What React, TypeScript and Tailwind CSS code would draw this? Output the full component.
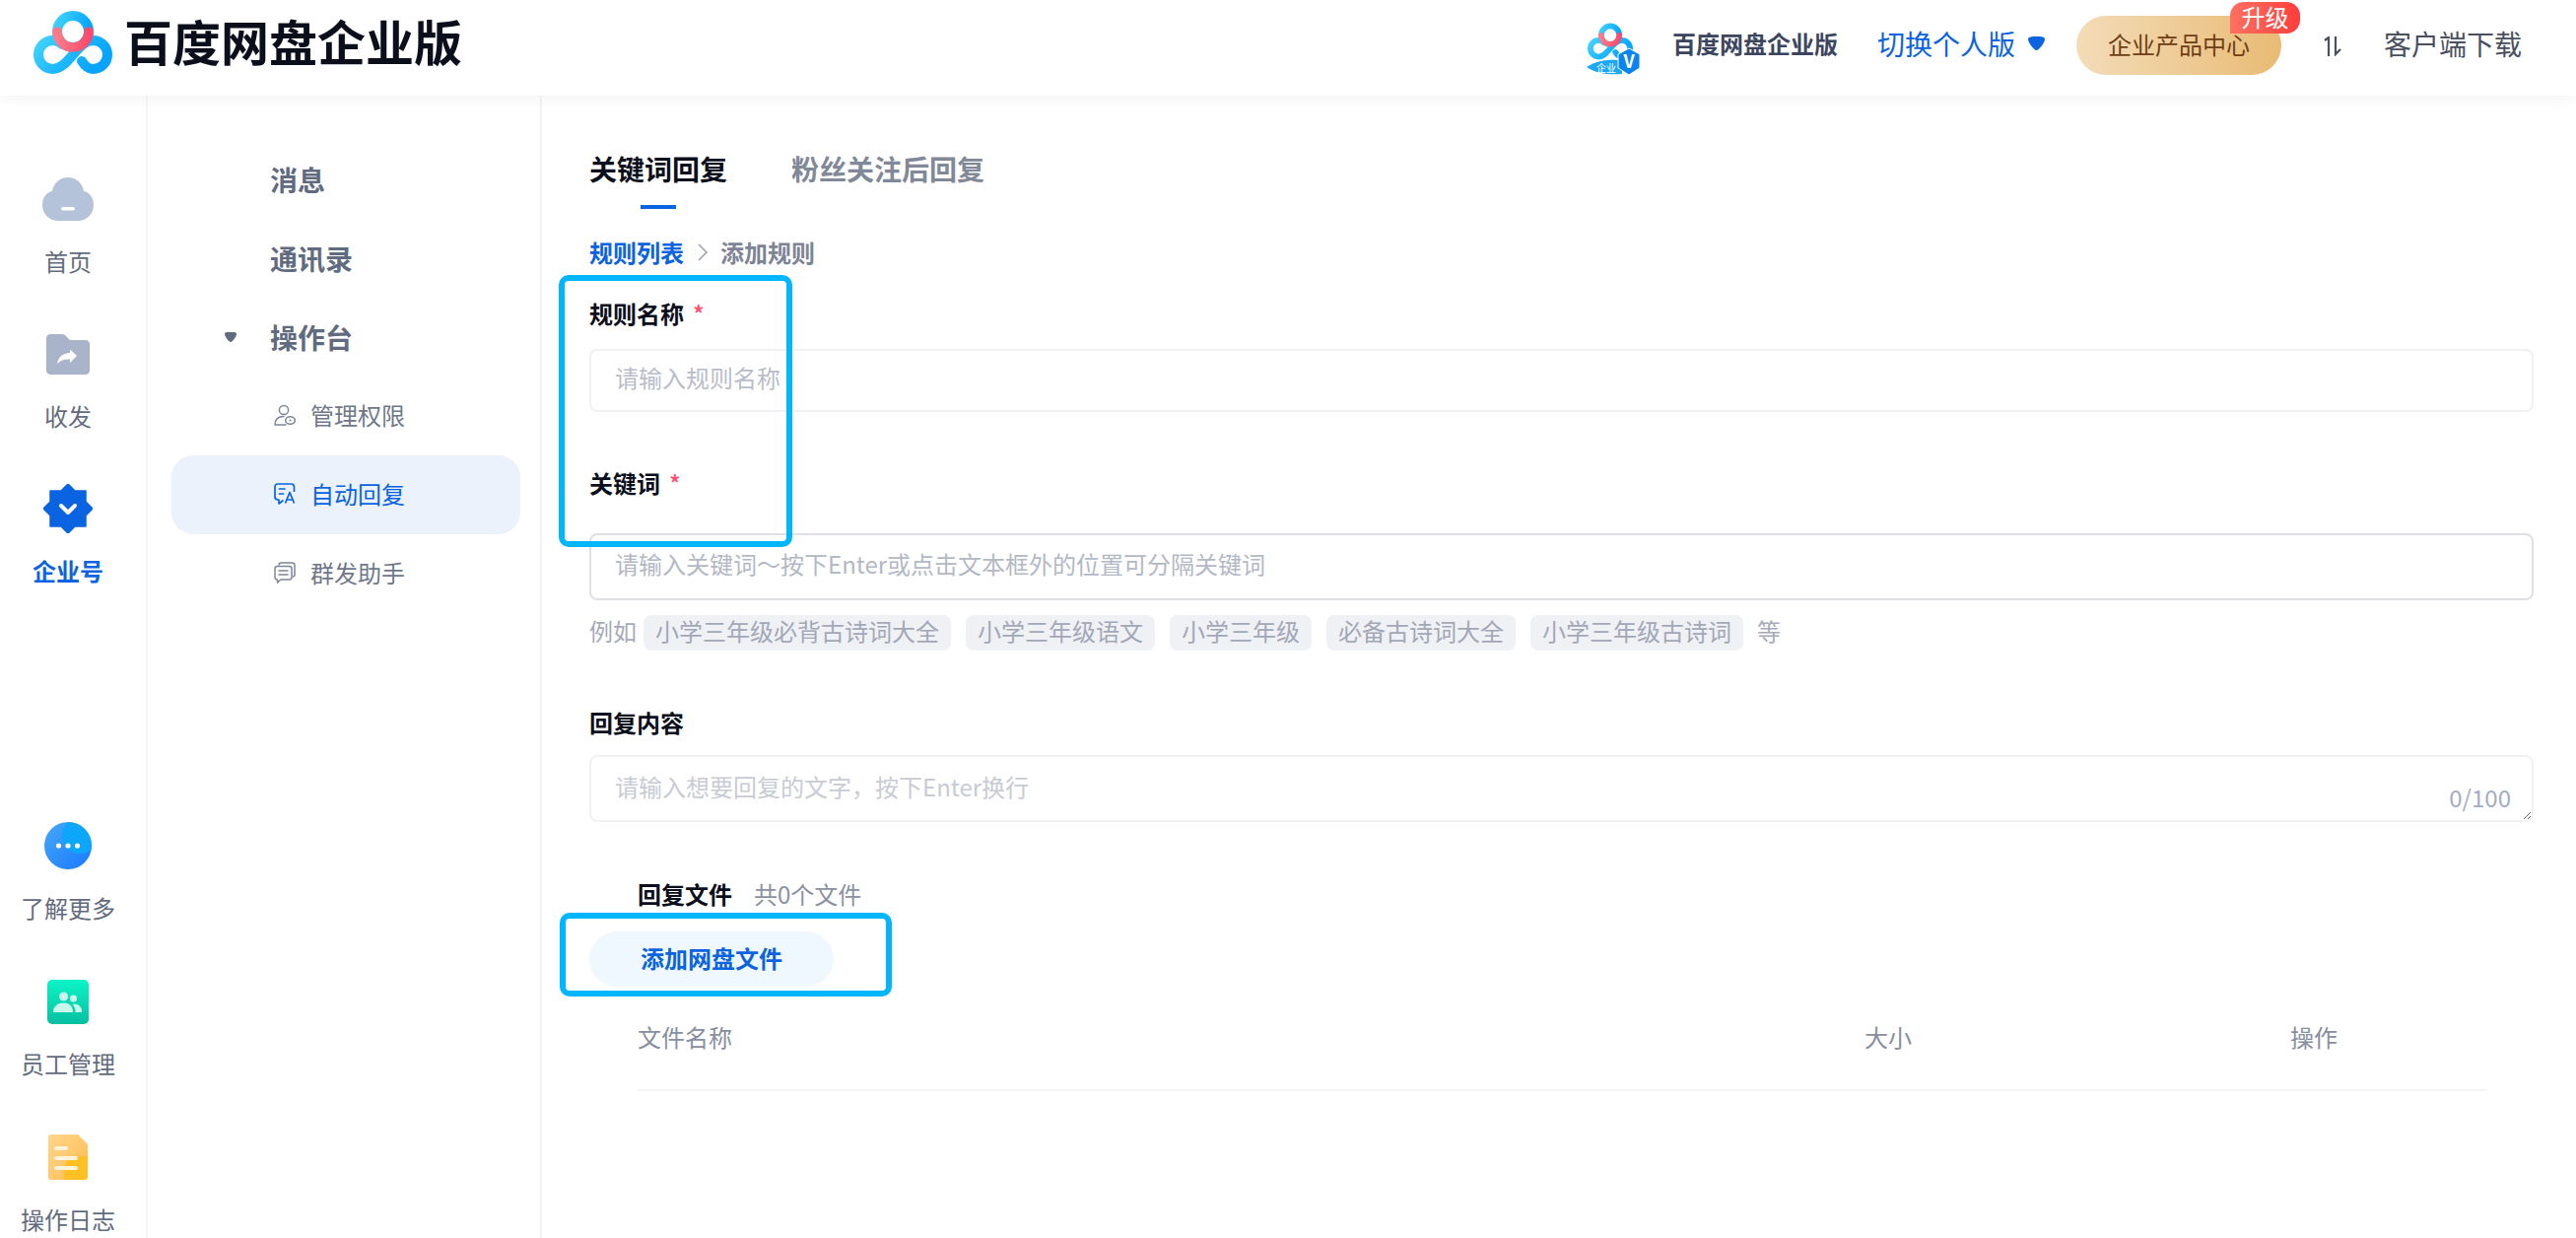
import React from "react";

const FONT = "font-['Noto_Sans_CJK_SC','Noto_Sans',sans-serif]";

const CloudLogo: React.FC<{ id: string; className: string }> = ({ id, className }) => (
    <svg viewBox="0 0 80 64" className={className}>
        <defs>
            <linearGradient id={`${id}-b`} x1="0" y1="0" x2="1" y2="0.4">
                <stop offset="0" stopColor="#3fd2ff" />
                <stop offset="1" stopColor="#06a4ff" />
            </linearGradient>
            <linearGradient id={`${id}-r`} x1="0" y1="0" x2="1" y2="0">
                <stop offset="0" stopColor="#ff7a8a" />
                <stop offset="1" stopColor="#ff4a6c" />
            </linearGradient>
        </defs>
        <path
            d="M49 51 C52 56 56 59 60.500 59 A14.500 14.500 0 0 0 60.500 30 C44 30 36 59 19.500 59 A14.500 14.500 0 0 1 19.500 30 C24 30 27 32 29 34"
            fill="none"
            stroke={`url(#${id}-b)`}
            strokeWidth="10"
            strokeLinecap="round"
        />
        <circle cx="40" cy="21" r="16" fill="none" stroke={`url(#${id}-b)`} strokeWidth="10" />
        <path
            d="M24 21 A16 16 0 0 0 56 21"
            fill="none"
            stroke={`url(#${id}-r)`}
            strokeWidth="9.500"
            strokeLinecap="round"
        />
    </svg>
);

const HomeIcon = () => (
    <svg viewBox="0 0 52 44" className="w-[52px] h-[44px]">
        <path
            d="M26 0 C34 0 41 6 42 14 C48 15 52 21 52 28 C52 37 45 44 36 44 H16 C7 44 0 37 0 28 C0 21 4 15 10 14 C11 6 18 0 26 0 Z"
            fill="#b4c2da"
        />
        <rect x="19" y="30" width="14" height="3.500" rx="1.750" fill="#fff" />
    </svg>
);

const FolderIcon = () => (
    <svg viewBox="0 0 44 41" className="w-[44px] h-[41px]">
        <path
            d="M4 0 H16 C18 0 19 1 20 2 L24 6 H40 C42 6 44 8 44 10 V37 C44 39 42 41 40 41 H4 C2 41 0 39 0 37 V4 C0 2 2 0 4 0 Z"
            fill="#a9b4ca"
        />
        <path d="M31 22 L24 15.500 V19 C17 19.500 12 23 11 30 C15 26 19 25 24 25.500 V29 Z" fill="#fff" />
    </svg>
);

const VerifiedIcon = () => (
    <svg viewBox="0 0 50 50" className="w-[50px] h-[50px]">
        <path
            d="M25 0 L32 7 H43 V18 L50 25 L43 32 V43 H32 L25 50 L18 43 H7 V32 L0 25 L7 18 V7 H18 Z"
            fill="#0a63e0"
            stroke="#0a63e0"
            strokeWidth="1.500"
            strokeLinejoin="round"
        />
        <path d="M18 22 L25 29 L32 22" fill="none" stroke="#fff" strokeWidth="4" strokeLinecap="round" strokeLinejoin="round" />
    </svg>
);

const MoreIcon = () => (
    <svg viewBox="0 0 48 48" className="w-[48px] h-[48px]">
        <defs>
            <linearGradient id="more-a" x1="0" y1="0" x2="1" y2="1">
                <stop offset="0" stopColor="#46a8f8" />
                <stop offset="1" stopColor="#1a78ff" />
            </linearGradient>
            <clipPath id="more-c">
                <circle cx="24" cy="24" r="24" />
            </clipPath>
        </defs>
        <circle cx="24" cy="24" r="24" fill="url(#more-a)" />
        <circle cx="36" cy="14" r="18" fill="#0ca6fb" clipPath="url(#more-c)" />
        <circle cx="14.500" cy="24" r="2.600" fill="#fff" />
        <circle cx="24" cy="24" r="2.600" fill="#fff" />
        <circle cx="33.500" cy="24" r="2.600" fill="#fff" />
    </svg>
);

const StaffIcon = () => (
    <svg viewBox="0 0 42 45" className="w-[42px] h-[45px]">
        <defs>
            <linearGradient id="staff-a" x1="0" y1="0" x2="0" y2="1">
                <stop offset="0" stopColor="#0cf5c8" />
                <stop offset="1" stopColor="#06bfa0" />
            </linearGradient>
        </defs>
        <rect width="42" height="45" rx="5" fill="url(#staff-a)" />
        <circle cx="16.500" cy="17" r="4.500" fill="#c8f7ec" />
        <circle cx="26.500" cy="19" r="3.600" fill="#c8f7ec" />
        <path d="M6 33 C6 26 11 23.500 16.500 23.500 C22 23.500 26 26 26 33 Z" fill="#c8f7ec" />
        <path d="M27 24.500 C32 24.500 35.500 28 35 33 H28.500 C28.500 29.500 27.500 27 25.500 25 Z" fill="#c8f7ec" />
    </svg>
);

const LogIcon = () => (
    <svg viewBox="0 0 40 46" className="w-[40px] h-[46px]">
        <defs>
            <linearGradient id="log-a" x1="0" y1="0" x2="1" y2="1">
                <stop offset="0" stopColor="#ffd68a" />
                <stop offset="1" stopColor="#ffbb50" />
            </linearGradient>
        </defs>
        <path d="M3 0 H30 L40 10 V43 C40 45 38 46 37 46 H3 C1 46 0 45 0 43 V3 C0 1 1 0 3 0 Z" fill="url(#log-a)" />
        <path d="M40 22 V43 C40 45 38 46 37 46 H16 V35 C16 28 22 22 29 22 Z" fill="#ffc024" />
        <rect x="6" y="12" width="14" height="4" rx="2" fill="#fff3dc" />
        <rect x="6" y="22" width="24" height="4" rx="2" fill="#fff3dc" />
        <rect x="6" y="32" width="24" height="4" rx="2" fill="#fff3dc" />
    </svg>
);

const PersonEyeIcon = () => (
    <svg viewBox="0 0 22 22" className="w-[22px] h-[22px]" fill="none" stroke="#7e8698" strokeWidth="1.500">
        <circle cx="10" cy="6" r="4.600" />
        <path d="M1 21 C1 15 5 12.500 10 12.500 M1 21 H12" strokeLinecap="round" />
        <ellipse cx="16.500" cy="16.500" rx="4.800" ry="3.800" />
        <circle cx="16.500" cy="16.500" r="1.100" fill="#7e8698" stroke="none" />
    </svg>
);

const ChatAIcon = () => (
    <svg viewBox="0 0 22 22" className="w-[22px] h-[22px]" fill="none" stroke="#0a63e0" strokeWidth="1.700">
        <path d="M20.500 9 V4 C20.500 2 19 1 17.500 1 H4 C2 1 1 2 1 4 V14 C1 16 2 17 4 17 H5 V21 L9.500 17.500" strokeLinejoin="round" />
        <path d="M5.500 6 H11 M5.500 11 H9.500" strokeLinecap="round" />
        <path d="M11.500 20.500 L16 9.500 L20.500 20.500 M13 17 H19" strokeLinejoin="round" />
    </svg>
);

const StackChatIcon = () => (
    <svg viewBox="0 0 22 22" className="w-[22px] h-[22px]" fill="none" stroke="#7e8698" strokeWidth="1.500">
        <path d="M5 3.500 C5 2 6 1 7.500 1 H18.500 C20 1 21 2 21 3.500 V13 C21 14.500 20 15 19 15" />
        <path d="M3.500 4.500 H15.500 C17 4.500 18 5.500 18 7 V15.500 C18 17 17 18 15.500 18 H7 L3.500 21 V18 C2 18 1 17 1 15.500 V7 C1 5.500 2 4.500 3.500 4.500 Z" strokeLinejoin="round" />
        <path d="M5 9 H14 M5 13 H14" strokeLinecap="round" />
    </svg>
);

const topRail = [
    { label: "首页", icon: <HomeIcon /> },
    { label: "收发", icon: <FolderIcon /> },
    { label: "企业号", icon: <VerifiedIcon />, active: true },
];

const bottomRail = [
    { label: "了解更多", icon: <MoreIcon /> },
    { label: "员工管理", icon: <StaffIcon /> },
    { label: "操作日志", icon: <LogIcon /> },
];

const exampleTags = ["小学三年级必背古诗词大全", "小学三年级语文", "小学三年级", "必备古诗词大全", "小学三年级古诗词"];

const RailItem: React.FC<{ label: string; icon: React.ReactNode; active?: boolean }> = ({ label, icon, active }) => (
    <div className="flex flex-col items-center gap-4">
        <div className="h-16 flex items-center justify-center">{icon}</div>
        <span className={active ? "h-8 text-2xl leading-[30px] font-bold text-[#0a63e0]" : "h-8 text-2xl leading-[30px] text-[#636b7f]"}>
            {label}
        </span>
    </div>
);

const Header = () => (
    <header className="relative z-10 h-[97px] shrink-0 bg-white flex items-center justify-between pl-[34px] pr-[55px] shadow-[0_4px_14px_rgba(0,0,0,0.045)]">
        <div className="flex items-center gap-3 -mt-[11px]">
            <CloudLogo id="main" className="w-20 h-16" />
            <span className="text-[49px] leading-[60px] font-bold text-[#0b0f1c] -mt-1">百度网盘企业版</span>
        </div>
        <div className="flex items-center -mt-[5px]">
            <div className="relative w-[57px] h-[54px] mt-2">
                <CloudLogo id="small" className="absolute left-[3px] top-0 w-[46px] h-[38px]" />
                <svg viewBox="0 0 57 54" className="absolute inset-0 w-[57px] h-[54px]">
                    <path d="M2 45 C12 38 26 37 38 38 L38 52 C26 53 12 52 2 45 Z" fill="#1ba8f5" />
                    <text x="22" y="50" fontSize="10" textAnchor="middle" fill="#fff">企业</text>
                    <path d="M45 26 L56 32 V46 L45 53 L34 46 V32 Z" fill="#0a84f0" stroke="#fff" strokeWidth="1" />
                    <text x="45" y="46" fontSize="18" fontWeight="700" textAnchor="middle" fill="#fff">V</text>
                </svg>
            </div>
            <span className="ml-8 -mt-[5px] text-2xl font-semibold text-[#3c4560]">百度网盘企业版</span>
            <span className="ml-10 -mt-[5px] text-[28px] text-[#0a63e0]">切换个人版</span>
            <svg viewBox="0 0 19 14" className="ml-3 -mt-1 w-[19px] h-[14px]">
                <path d="M1 3 C1 0 5 0 9.500 0 C14 0 18 0 18 3 C18 6 12 14 9.500 14 C7 14 1 6 1 3 Z" fill="#0a63e0" />
            </svg>
            <div className="relative ml-[31px] w-[208px] h-[60px] pb-[2px] rounded-full bg-gradient-to-r from-[#f3dcb8] to-[#e9bb74] flex items-center justify-center">
                <span className="text-2xl text-[#6e3f14]">企业产品中心</span>
                <span className="absolute -top-[14px] left-[156px] w-[71px] h-8 rounded-t-[14px] rounded-br-[14px] bg-gradient-to-r from-[#ff6f61] to-[#ff3c3c] text-2xl leading-[30px] text-white text-center">
                    升级
                </span>
            </div>
            <svg viewBox="0 0 20 20" className="ml-[42px] mt-[2px] w-5 h-5" fill="none" stroke="#4a5060" strokeWidth="2.200">
                <path d="M2 4 L6 1 V20 M13 0 V18 L18 13" />
            </svg>
            <span className="ml-[42px] -mt-[5px] text-[28px] text-[#4a5060]">客户端下载</span>
        </div>
    </header>
);

const Sidebar = () => (
    <>
        <aside className="w-[150px] shrink-0 border-r-2 border-[#f6f6f8] flex flex-col items-center pt-[73px] pb-[2px] pr-[10px]">
            <div className="flex flex-col items-center gap-[45px]">
                {topRail.map((item) => (
                    <RailItem key={item.label} {...item} />
                ))}
            </div>
            <div className="mt-auto flex flex-col items-center gap-[46px]">
                {bottomRail.map((item) => (
                    <RailItem key={item.label} {...item} />
                ))}
            </div>
        </aside>
        <nav className="w-[400px] shrink-0 border-r-2 border-[#f3f3f5] pt-[45px] pl-6 pr-5">
            <div className="h-20 flex items-center pl-[100px] text-[28px] font-semibold text-[#616b7f]">消息</div>
            <div className="h-20 flex items-center pl-[100px] text-[28px] font-semibold text-[#616b7f]">通讯录</div>
            <div className="h-20 flex items-center pl-[53px] text-[28px] font-semibold text-[#616b7f]">
                <svg viewBox="0 0 14 10" className="w-[14px] h-[10px] mr-[33px]">
                    <path d="M1 2 C1 0 3 0 7 0 C11 0 13 0 13 2 C13 4 9 10 7 10 C5 10 1 4 1 2 Z" fill="#616b7f" />
                </svg>
                操作台
            </div>
            <div className="h-20 flex items-center gap-[15px] pl-[104px] pb-[2px] text-2xl text-[#6f7789]">
                <PersonEyeIcon />
                管理权限
            </div>
            <div className="h-20 flex items-center gap-[15px] pl-[104px] pb-[2px] text-2xl text-[#0a63e0] bg-[#ebf2fc] rounded-[22px]">
                <ChatAIcon />
                自动回复
            </div>
            <div className="h-20 flex items-center gap-[15px] pl-[104px] pb-[2px] text-2xl text-[#6f7789]">
                <StackChatIcon />
                群发助手
            </div>
        </nav>
    </>
);

const RuleForm = () => (
    <main className="flex-1 min-w-0 pl-12 pr-[43px] pt-[54px]">
        <div className="flex gap-[65px] text-[28px] leading-10 font-bold">
            <div className="flex flex-col items-center">
                <span className="text-[#0b0f1c]">关键词回复</span>
                <span className="mt-[17px] w-9 h-1 bg-[#0a63e0]" />
            </div>
            <span className="text-[#818898] font-semibold">粉丝关注后回复</span>
        </div>

        <div className="mt-7 h-8 flex items-center text-2xl leading-8 font-semibold">
            <span className="text-[#0a63e0]">规则列表</span>
            <svg viewBox="0 0 10 18" className="mx-[14px] w-[10px] h-[18px]" fill="none" stroke="#8f95a5" strokeWidth="1.300">
                <path d="M1 1 L9 9 L1 17" />
            </svg>
            <span className="-ml-[1px] text-[#7d8496]">添加规则</span>
        </div>

        <label className="mt-8 h-8 flex text-2xl leading-7 font-bold text-[#0b0f1c]">
            规则名称<span className="ml-[9px] text-[#ff4d6d] font-medium">*</span>
        </label>
        <input
            className="mt-[18px] w-full h-16 px-6 pb-2 border-2 border-[#f0f0f5] rounded-lg text-2xl outline-none placeholder:text-[#b9bdc9]"
            placeholder="请输入规则名称"
        />

        <label className="mt-[58px] h-8 flex text-2xl leading-7 font-bold text-[#0b0f1c]">
            关键词<span className="ml-[9px] text-[#ff4d6d] font-medium">*</span>
        </label>
        <input
            className="mt-[33px] w-full h-[68px] px-6 pb-2 border-2 border-[#dfe0e6] rounded-lg text-2xl outline-none placeholder:text-[#b3b8c5]"
            placeholder="请输入关键词～按下Enter或点击文本框外的位置可分隔关键词"
        />

        <div className="mt-[15px] flex items-center text-2xl text-[#a6abba]">
            <span className="mr-[7px] -mt-1">例如</span>
            <div className="flex gap-[15px]">
                {exampleTags.map((tag) => (
                    <span key={tag} className="h-9 px-3 rounded-lg bg-[#f0f1f5] leading-[31px] text-[#a2a8b8]">
                        {tag}
                    </span>
                ))}
            </div>
            <span className="ml-[14px] -mt-1">等</span>
        </div>

        <label className="mt-[58px] h-8 flex text-2xl leading-[30px] font-bold text-[#0b0f1c]">回复内容</label>
        <div className="relative mt-4 h-[68px]">
            <textarea
                className="block w-full h-[68px] px-6 pt-[14px] pb-4 border-2 border-[#f0f0f5] rounded-lg text-2xl leading-8 outline-none placeholder:text-[#c8cbd4]"
                placeholder="请输入想要回复的文字，按下Enter换行"
            />
            <span className="absolute right-[23px] top-[27px] text-2xl leading-8 text-[#a3adc2]">0/100</span>
        </div>

        <div className="mt-[58px] pl-[49px] h-8 flex text-2xl leading-[30px]">
            <span className="font-bold text-[#0b0f1c]">回复文件</span>
            <span className="ml-[22px] text-[#8a91a2]">共0个文件</span>
        </div>
        <button className="mt-[21px] block w-[248px] h-14 pb-[2px] rounded-full bg-[#f0f8ff] text-2xl font-semibold text-[#0a63e0]">
            添加网盘文件
        </button>

        <div className="mt-[37px] ml-[49px] w-[1877px] pb-[39px] border-b-2 border-[#f6f6f8] grid grid-cols-[1245px_432px_200px] text-2xl leading-7 text-[#878e9f]">
            <span>文件名称</span>
            <span>大小</span>
            <span>操作</span>
        </div>
    </main>
);

const App = () => (
    <div className={`relative w-full h-screen overflow-hidden bg-white flex flex-col ${FONT}`}>
        <Header />
        <div className="flex-1 min-h-0 flex">
            <Sidebar />
            <RuleForm />
        </div>
        {/* annotation boxes drawn on top of the form */}
        <div className="absolute left-[567px] top-[279px] w-[237px] h-[276px] border-[6px] border-[#00b7ff] rounded-[10px]" />
        <div className="absolute left-[568px] top-[926px] w-[337px] h-[85px] border-[6px] border-[#00b7ff] rounded-[10px]" />
    </div>
);

export default App;
